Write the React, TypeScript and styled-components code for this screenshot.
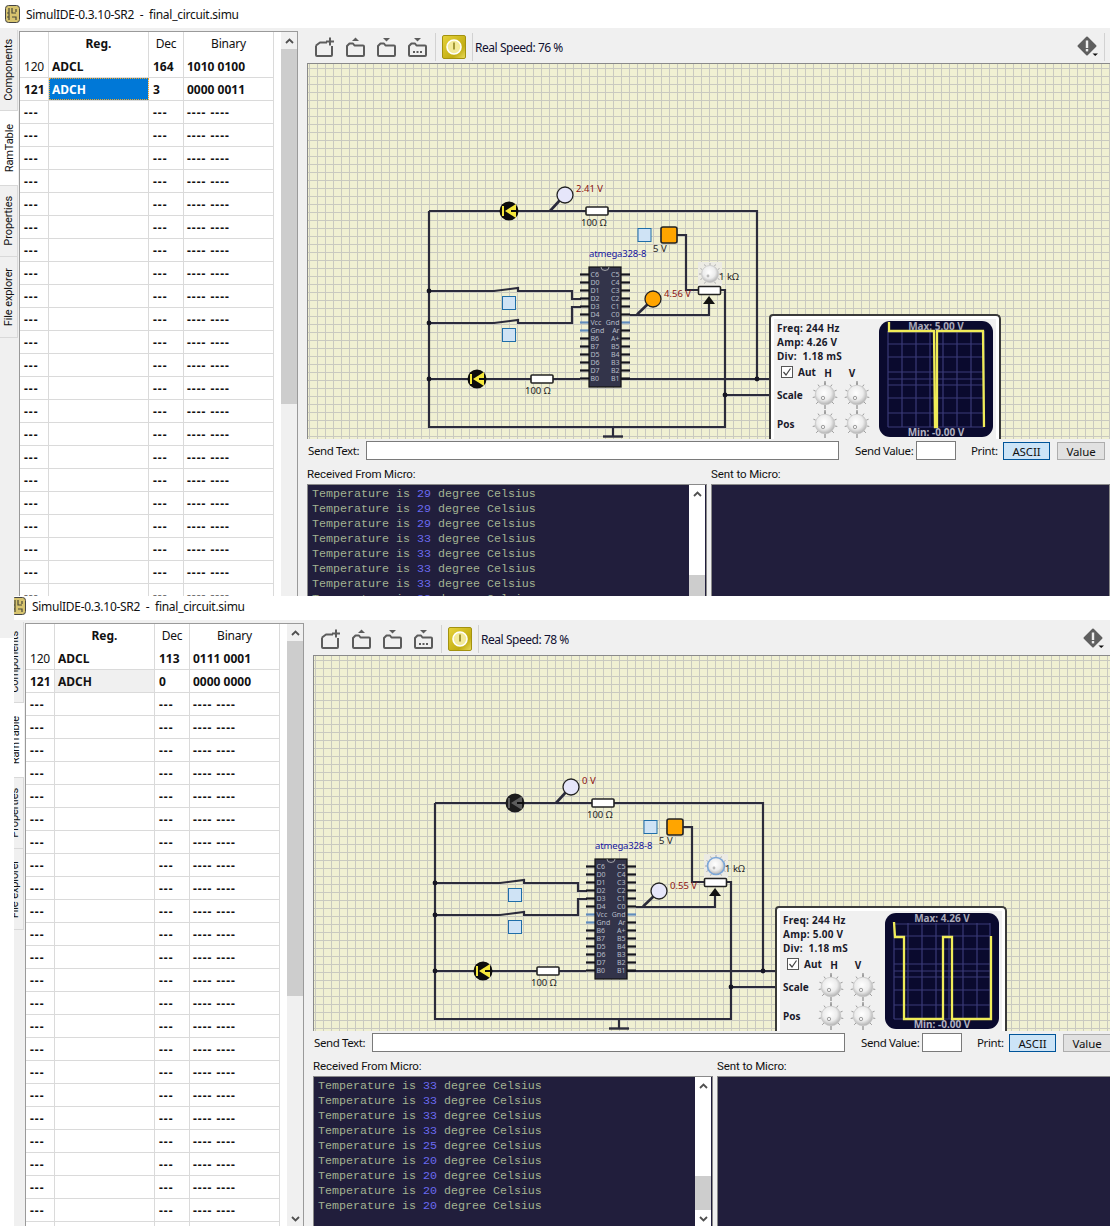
import React from "react";
import styled, { createGlobalStyle } from "styled-components";

const UI = `"Noto Sans", "Open Sans", Arial, sans-serif`;
const NARROW = `Roboto, "Noto Sans", Arial, sans-serif`;
const WIRE = "#2b2b3b";

const Global = createGlobalStyle`
  html, body { margin: 0; padding: 0; background: #fff; }
  body { font-family: ${UI}; font-size: 12px; color: #111; }
`;

const Desktop = styled.div`
  position: relative;
  width: 1110px;
  height: 1226px;
  overflow: hidden;
  background: #fff;
`;

const Win = styled.section<{ $left: number; $top: number; $h: number; $clip?: boolean }>`
  position: absolute;
  left: ${(p) => p.$left}px;
  top: ${(p) => p.$top}px;
  width: 1110px;
  height: ${(p) => p.$h}px;
  background: #f0f0f0;
  display: flex;
  flex-direction: column;
  overflow: hidden;
  ${(p) => (p.$clip ? "clip-path: inset(4px 0 0 8px);" : "")}
`;

const TitleBar = styled.header`
  height: 28px;
  flex: none;
  background: #fff;
  display: flex;
  align-items: center;
  gap: 6px;
  padding-left: 5px;
  font-size: 12px;
  letter-spacing: -0.28px;
  white-space: pre;
`;

const Body = styled.div`
  flex: 1;
  min-height: 0;
  display: flex;
`;

const TabStrip = styled.nav`
  width: 18px;
  flex: none;
  padding-top: 2px;
  display: flex;
  flex-direction: column;
`;

const Tab = styled.div<{ $h: number; $active?: boolean }>`
  height: ${(p) => p.$h}px;
  box-sizing: border-box;
  background: ${(p) => (p.$active ? "#fff" : "#f0f0f0")};
  border-bottom: 1px solid #d9d9d9;
  border-right: ${(p) => (p.$active ? "none" : "1px solid #d9d9d9")};
  display: flex;
  align-items: center;
  justify-content: center;
  font-family: ${NARROW};
  font-size: 11px;
  letter-spacing: -0.1px;
  white-space: nowrap;
  span {
    writing-mode: vertical-rl;
    transform: rotate(180deg);
  }
`;

const TablePane = styled.div`
  width: 279px;
  flex: none;
  box-sizing: border-box;
  margin: 3px 0 4px 1px;
  border: 1px solid #9a9a9a;
  background: #fff;
  display: flex;
  overflow: hidden;
`;

const Rows = styled.div`
  width: 254px;
  flex: none;
  overflow: hidden;
`;

const Row = styled.div<{ $header?: boolean }>`
  display: grid;
  grid-template-columns: 29px 100px 35px 90px;
  height: 23px;
  box-sizing: border-box;
  border-bottom: ${(p) => (p.$header ? "none" : "1px solid #dadada")};
`;

const Cell = styled.div<{
  $bold?: boolean;
  $center?: boolean;
  $pad?: number;
  $dash?: boolean;
  $sel?: "focus" | "idle";
}>`
  border-right: 1px solid #dadada;
  display: flex;
  align-items: center;
  justify-content: ${(p) => (p.$center ? "center" : "flex-start")};
  padding-left: ${(p) => (p.$center ? 0 : p.$pad ?? 4)}px;
  font-size: 12px;
  letter-spacing: ${(p) => (p.$dash ? "1px" : p.$bold ? "0" : "-0.2px")};
  font-weight: ${(p) => (p.$bold ? 700 : 400)};
  white-space: pre;
  background: ${(p) => (p.$sel === "focus" ? "#0078d7" : p.$sel === "idle" ? "#f0f0f0" : "transparent")};
  color: ${(p) => (p.$sel === "focus" ? "#fff" : "#111")};
  outline: ${(p) => (p.$sel === "focus" ? "1px dotted #f5a623" : "none")};
  outline-offset: -1px;
`;

const ScrollV = styled.div<{ $white?: boolean; $w: number }>`
  width: ${(p) => p.$w}px;
  flex: none;
  margin-left: auto;
  margin-right: ${(p) => (p.$white ? 1 : 0)}px;
  background: ${(p) => (p.$white ? "#fff" : "#f0f0f0")};
  display: flex;
  flex-direction: column;
  min-height: 0;
`;

const ScrollArrow = styled.div`
  height: 17px;
  flex: none;
  display: flex;
  align-items: center;
  justify-content: center;
  background: inherit;
`;

const ScrollTrack = styled.div<{ $offset: number; $len: number }>`
  flex: 1;
  min-height: 0;
  overflow: hidden;
  padding-top: ${(p) => p.$offset}px;
  &::before {
    content: "";
    display: block;
    height: ${(p) => p.$len}px;
    background: #cdcdcd;
  }
`;

const Chevron = ({ down }: { down?: boolean }) => (
  <svg width="9" height="6" viewBox="0 0 9 6">
    <polyline
      points={down ? "1,1 4.5,4.5 8,1" : "1,5 4.5,1.5 8,5"}
      fill="none"
      stroke="#505050"
      strokeWidth="1.8"
    />
  </svg>
);

const Main = styled.main`
  flex: 1;
  min-width: 0;
  margin-left: 9px;
  display: flex;
  flex-direction: column;
`;

const Toolbar = styled.div`
  height: 35px;
  flex: none;
  box-sizing: border-box;
  margin-left: -1px;
  display: flex;
  align-items: center;
  gap: 12px;
  padding: 2px 5px 0 9px;
`;

const Sep = styled.i<{ $before: number; $after: number }>`
  width: 1px;
  height: 28px;
  background: #d2d2d2;
  margin: 0 ${(p) => p.$after - 12}px 0 ${(p) => p.$before - 12}px;
`;

const Speed = styled.span`
  font-size: 12px;
  letter-spacing: -0.46px;
  padding-top: 1px;
  color: #101030;
  white-space: nowrap;
`;

const PowerBtn = styled.div`
  width: 24px;
  height: 24px;
  box-sizing: border-box;
  border: 1px solid #a3920f;
  border-radius: 2px;
  background: linear-gradient(135deg, #e6d23a, #c2ad12 70%, #e8d95a);
  display: flex;
  align-items: center;
  justify-content: center;
`;

const WarnWrap = styled.div`
  margin-left: auto;
  display: flex;
`;

const Canvas = styled.div`
  position: relative;
  height: 376px;
  flex: none;
  box-sizing: border-box;
  overflow: hidden;
  border-left: 1px solid #8a8a8a;
  border-top: 1px solid #8a8a8a;
  background-color: #f0f0d2;
  background-image: linear-gradient(#c9c9c0 1px, transparent 1px),
    linear-gradient(90deg, #c9c9c0 1px, transparent 1px);
  background-size: 8px 8px;
  background-position: 1px 4px;
`;

const CircuitSvg = styled.svg`
  position: absolute;
  left: -1px;
  top: -1px;
`;

const CText = styled.text<{ $c?: string; $s?: number }>`
  font-family: ${UI};
  font-size: ${(p) => p.$s ?? 9.5}px;
  fill: ${(p) => p.$c ?? "#222"};
`;

const ScopeFrame = styled.div`
  position: absolute;
  left: 461px;
  top: 250px;
  width: 232px;
  height: 140px;
  box-sizing: border-box;
  border: 2px solid #3a3a3a;
  border-bottom: none;
  border-radius: 4px 5px 0 0;
  background: #fff;
  padding: 3px 3px 0 3px;
`;

const ScopePanel = styled.div`
  height: 100%;
  background: #f0f0f0;
  display: flex;
  padding: 2px 0 0 3px;
  box-sizing: border-box;
`;

const ScopeControls = styled.div`
  width: 102px;
  flex: none;
  display: flex;
  flex-direction: column;
`;

const Readout = styled.div`
  height: 14px;
  line-height: 14px;
  font-size: 10px;
  font-weight: 700;
  letter-spacing: 0.25px;
  white-space: pre;
  color: #1a1a2a;
`;

const KnobGrid = styled.div`
  display: grid;
  grid-template-columns: 32px 32px 32px;
  grid-template-rows: 17px 29px 29px;
  align-items: center;
`;

const AutoCell = styled.div`
  display: flex;
  align-items: center;
  gap: 5px;
  padding-left: 4px;
  font-size: 10px;
  font-weight: 700;
  color: #1a1a2a;
  white-space: nowrap;
`;

const Check = styled.span`
  width: 12px;
  height: 12px;
  flex: none;
  box-sizing: border-box;
  border: 1px solid #555;
  background: #fff;
  display: flex;
`;

const AxisLabel = styled.span<{ $shift: number }>`
  font-size: 10px;
  font-weight: 700;
  text-align: center;
  padding-left: ${(p) => Math.max(p.$shift, 0)}px;
  padding-right: ${(p) => Math.max(-p.$shift, 0)}px;
  padding-top: 3px;
  color: #1a1a2a;
`;

const RowLabel = styled.span`
  font-size: 10px;
  font-weight: 700;
  color: #1a1a2a;
`;

const KnobBox = styled.div`
  display: flex;
  justify-content: center;
`;

const SendRow = styled.div`
  height: 25px;
  flex: none;
  box-sizing: border-box;
  display: flex;
  align-items: flex-start;
  padding: 2px 5px 0 1px;
  font-size: 11.5px;
  letter-spacing: -0.4px;
`;

const SendLabel = styled.label<{ $w: number; $ml?: number }>`
  width: ${(p) => p.$w}px;
  margin-left: ${(p) => p.$ml ?? 0}px;
  flex: none;
  line-height: 19px;
  white-space: nowrap;
`;

const Field = styled.div<{ $w?: number }>`
  ${(p) => (p.$w ? `width:${p.$w}px;flex:none;` : "flex:1;")}
  height: 19px;
  box-sizing: border-box;
  background: #fff;
  border: 1px solid #7a7a7a;
`;

const PrintBtn = styled.div<{ $on?: boolean; $w: number; $ml?: number }>`
  width: ${(p) => p.$w}px;
  height: 18px;
  margin: 1px 0 0 ${(p) => p.$ml ?? 0}px;
  box-sizing: border-box;
  flex: none;
  display: flex;
  align-items: center;
  justify-content: center;
  letter-spacing: -0.1px;
  border: 1px solid ${(p) => (p.$on ? "#005499" : "#adadad")};
  background: ${(p) => (p.$on ? "#cce4f7" : "#e1e1e1")};
  color: #111;
`;

const LabelRow = styled.div`
  height: 20px;
  flex: none;
  display: grid;
  grid-template-columns: 404px 1fr;
  align-items: center;
  font-family: ${NARROW};
  font-size: 11.5px;
  letter-spacing: -0.1px;
`;

const Terminals = styled.div`
  flex: 1;
  min-height: 0;
  display: grid;
  grid-template-columns: 400px 1fr;
  gap: 4px;
  margin-bottom: 4px;
`;

const Terminal = styled.div`
  background: #211e3c;
  box-sizing: border-box;
  border: 1px solid #8a8a8a;
  display: flex;
  min-height: 0;
  overflow: hidden;
`;

const Lines = styled.pre`
  flex: 1;
  margin: 0;
  padding: 2px 0 0 4px;
  font-family: "Liberation Mono", "Courier New", monospace;
  font-size: 11.67px;
  line-height: 15px;
  color: #a3b392;
  overflow: hidden;
  b {
    font-weight: 400;
    color: #6a6af0;
  }
`;

/* ---------- drawings ---------- */

const AppIcon = () => (
  <svg width="15" height="18" viewBox="0 0 15 18">
    <rect x="0.5" y="0.5" width="14" height="17" rx="3" fill="#d7c46f" stroke="#444" />
    <path d="M4 3v12M7 3v5h4M11 4v3M7 12h4v3M4 8H2M4 12H2" stroke="#4a4a3a" strokeWidth="1.2" fill="none" />
  </svg>
);

const GREY = "#5c5c5c";

const FileIcon = ({ kind }: { kind: "new" | "open" | "save" | "saveas" }) => (
  <svg width="19" height="20" viewBox="0 0 19 20">
    <path
      d={
        kind === "new"
          ? "M1 8.5 L5 5.5 H12 M17 9 V18 a1 1 0 0 1-1 1 H2 a1 1 0 0 1-1-1 V8.5"
          : "M1 9 L3.5 6.5 H7 L8.5 8.5 H17 a1 1 0 0 1 1 1 V18 a1 1 0 0 1-1 1 H2 a1 1 0 0 1-1-1 Z"
      }
      fill="none"
      stroke={GREY}
      strokeWidth="2"
      strokeLinejoin="round"
    />
    {kind === "new" && <path d="M15 0.5 v8 M11 4.5 h8" stroke={GREY} strokeWidth="2" />}
    {kind === "open" && <polygon points="9.5,0.5 13,4 6,4" fill={GREY} />}
    {(kind === "save" || kind === "saveas") && <polygon points="6,1 13,1 9.5,4.5" fill={GREY} />}
    {kind === "saveas" && <path d="M5 15h2M8.5 15h2M12 15h2" stroke={GREY} strokeWidth="2" />}
  </svg>
);

const PowerIcon = () => (
  <svg width="16" height="16" viewBox="0 0 16 16">
    <circle cx="8" cy="8" r="7" fill="#f3ea9a" stroke="#fff" strokeWidth="1.6" />
    <rect x="7.2" y="3.5" width="1.6" height="7" fill="#8f8420" />
  </svg>
);

const WarnIcon = () => (
  <svg width="22" height="22" viewBox="0 0 22 22">
    <path d="M10 1.5 L18.5 10 L10 18.5 L1.5 10 Z" fill="#5f5f5f" stroke="#5f5f5f" strokeWidth="2" strokeLinejoin="round" />
    <rect x="8.8" y="4.5" width="2.4" height="7.5" fill="#eee" />
    <rect x="8.8" y="13" width="2.4" height="2.4" fill="#eee" />
    <polygon points="15.5,17.5 21,17.5 18.2,20" fill="#111" />
  </svg>
);

const Led = ({ x, y, lit }: { x: number; y: number; lit: boolean }) => {
  const c = lit ? "#f5e83c" : "#5c5c5c";
  return (
    <g>
      <circle cx={x} cy={y} r="9.5" fill={lit ? "#0c0c0c" : "#1c1c1c"} />
      <polygon points={`${x + 7},${y - 7} ${x + 7},${y + 7} ${x - 4},${y}`} fill={c} />
      <rect x={x - 7} y={y - 5} width="2" height="10" fill={c} />
      <rect x={x + 2} y={y - 1} width="7" height="2" fill="#0c0c0c" />
    </g>
  );
};

const Resistor = ({ x, y, w = 22 }: { x: number; y: number; w?: number }) => (
  <rect x={x} y={y - 4} width={w} height="8" rx="1" fill="#fff" stroke="#222" strokeWidth="1.6" />
);

const Probe = ({ cx, cy, fill, x1, y1 }: { cx: number; cy: number; fill: string; x1: number; y1: number }) => (
  <g>
    <line x1={x1} y1={y1} x2={cx - 4} y2={cy + 4} stroke={WIRE} strokeWidth="2.6" />
    <circle cx={cx} cy={cy} r="8" fill={fill} stroke="#222" strokeWidth="1.3" />
  </g>
);

const Dot = ({ x, y }: { x: number; y: number }) => <circle cx={x} cy={y} r="2.4" fill="#161622" />;

const SwitchBlade = ({ y }: { y: number }) => (
  <path d={`M429 ${y} H494 L518 ${y - 3} V${y} H524`} fill="none" stroke={WIRE} strokeWidth="2.2" />
);

const BlueBox = ({ x, y }: { x: number; y: number }) => (
  <rect x={x - 6.5} y={y - 6.5} width="13" height="13" fill="#cfe3f5" stroke="#1f6ea8" strokeWidth="1" />
);

const Dial = ({ active }: { active: boolean }) => {
  const ticks = Array.from({ length: 11 }, (_, i) => (i * 300) / 10 - 240);
  return (
    <g>
      <rect x="698" y="262" width="24" height="24" fill="#ecebe4" />
      {ticks.map((a) => {
        const r = (a * Math.PI) / 180;
        return (
          <line
            key={a}
            x1={710 + 9 * Math.cos(r)}
            y1={274 + 9 * Math.sin(r)}
            x2={710 + 11 * Math.cos(r)}
            y2={274 + 11 * Math.sin(r)}
            stroke="#aaa"
          />
        );
      })}
      <circle cx="710" cy="274" r="8.5" fill="url(#knobFill)" stroke={active ? "#7aa6d8" : "#c8c8c8"} strokeWidth={active ? 1.6 : 0.8} />
      <circle cx="708" cy="276" r="1.4" fill="#bbb" />
    </g>
  );
};

const LEFT_PINS = ["C6", "D0", "D1", "D2", "D3", "D4", "Vcc", "Gnd", "B6", "B7", "D5", "D6", "D7", "B0"];
const RIGHT_PINS = ["C5", "C4", "C3", "C2", "C1", "C0", "Gnd", "Ar", "A+", "B5", "B4", "B3", "B2", "B1"];

const Chip = () => (
  <g>
    {LEFT_PINS.map((n, i) => {
      const y = 274.5 + i * 8;
      const power = n === "Vcc" || n === "Gnd";
      return (
        <g key={n + i}>
          <line x1="580" x2="589" y1={y} y2={y} stroke={power ? "#5f8bbd" : "#15151f"} strokeWidth="2.2" />
        </g>
      );
    })}
    {RIGHT_PINS.map((n, i) => {
      const y = 274.5 + i * 8;
      return <line key={n + i} x1="621" x2="630" y1={y} y2={y} stroke={n === "Gnd" ? "#5f8bbd" : "#15151f"} strokeWidth="2.2" />;
    })}
    <rect x="589" y="267" width="32" height="120" fill="#33344a" stroke="#111" strokeWidth="1.2" />
    <path d="M601 267 a4 3.5 0 0 0 8 0" fill="none" stroke="#bbb" strokeWidth="0.8" />
    {LEFT_PINS.map((n, i) => (
      <CText key={n + i} x={590.5} y={277 + i * 8} $s={7} $c="#b6bcc8">
        {n}
      </CText>
    ))}
    {RIGHT_PINS.map((n, i) => (
      <CText key={n + i} x={619.5} y={277 + i * 8} $s={7} $c="#b6bcc8" textAnchor="end">
        {n}
      </CText>
    ))}
  </g>
);

type Data = {
  title: string;
  speed: string;
  adcl: [string, string];
  adch: [string, string];
  sel: "focus" | "idle";
  ledOn: boolean;
  probe1: { fill: string; text: string };
  probe2: { fill: string; text: string };
  dialActive: boolean;
  scope: { amp: string; max: string; min: string; trace: string };
  temps: string[];
  thumb: number;
};

const Circuit = ({ d }: { d: Data }) => (
  <CircuitSvg width="803" height="376" viewBox="307 63 803 376">
    <defs>
      <radialGradient id="knobFill" cx="45%" cy="40%" r="65%">
        <stop offset="0" stopColor="#fff" />
        <stop offset="0.55" stopColor="#ececec" />
        <stop offset="1" stopColor="#a4a4a4" />
      </radialGradient>
    </defs>
    <g fill="none" stroke={WIRE} strokeWidth="2.2">
      <path d="M429 211 H757 V379 M429 211 V427 H725 V290 H716" />
      <path d="M429 379 H580 M621 379 H775 M725 395 H775" />
      <path d="M524 291 H572 V299 H581 M524 323 H572 V307 H581" />
      <path d="M677 235 H686 V290 H698" />
      <path d="M630 315 H709 V302" />
      <path d="M613 427 V436" />
      <path d="M603 436.5 H623" strokeWidth="2.4" />
    </g>
    <polygon points="703,304 715,304 709,296" fill="#111" />
    <SwitchBlade y={291} />
    <SwitchBlade y={323} />
    <Dot x={429} y={291} />
    <Dot x={429} y={323} />
    <Dot x={429} y={379} />
    <Dot x={757} y={379} />
    <Dot x={725} y={395} />
    <Led x={509} y={211} lit={d.ledOn} />
    <Led x={477} y={379} lit />
    <Probe cx={565} cy={195} fill={d.probe1.fill} x1={550} y1={211} />
    <CText x={576} y={192} $c="#8b1010">{d.probe1.text}</CText>
    <Resistor x={586} y={211} />
    <CText x={581} y={226}>100 Ω</CText>
    <Resistor x={531} y={379} />
    <CText x={525} y={394}>100 Ω</CText>
    <BlueBox x={644.5} y={235} />
    <BlueBox x={509} y={303} />
    <BlueBox x={509} y={335} />
    <rect x="661" y="227" width="16" height="16" rx="2" fill="#ffa500" stroke="#222" strokeWidth="1.6" />
    <CText x={653} y={252}>5 V</CText>
    <CText x={589} y={257} $c="#1414a0" letterSpacing="-0.15">atmega328-8</CText>
    <Chip />
    <Probe cx={653} cy={299} fill={d.probe2.fill} x1={637} y1={314.5} />
    <CText x={664} y={297} $c="#8b1010">{d.probe2.text}</CText>
    <Dial active={d.dialActive} />
    <Resistor x={698.5} y={290.5} />
    <CText x={719} y={280}>1 kΩ</CText>
  </CircuitSvg>
);

const Knob = () => {
  const ticks = Array.from({ length: 9 }, (_, i) => -225 + i * 33.75);
  return (
    <svg width="28" height="28" viewBox="0 0 28 28">
      {ticks.map((a) => {
        const r = (a * Math.PI) / 180;
        return (
          <line
            key={a}
            x1={14 + 10 * Math.cos(r)}
            y1={14 + 10 * Math.sin(r)}
            x2={14 + 12.5 * Math.cos(r)}
            y2={14 + 12.5 * Math.sin(r)}
            stroke="#9a9a9a"
          />
        );
      })}
      <line x1="14" y1="0" x2="14" y2="4" stroke="#777" />
      <line x1="14" y1="24" x2="14" y2="28" stroke="#777" />
      <circle cx="14" cy="14" r="9.8" fill="url(#knobFill)" stroke="#c4c4c4" strokeWidth="0.7" />
      <circle cx="12" cy="17" r="1.7" fill="none" stroke="#a0a0a0" />
    </svg>
  );
};

const VX = [9, 23, 37, 51, 64, 78, 92, 105];
const HY = [11, 23, 36, 51, 58, 64, 77, 92, 106];

const ScopeScreen = ({ s }: { s: Data["scope"] }) => (
  <svg width="114" height="116" viewBox="0 0 114 116">
    <rect width="114" height="116" rx="11" fill="#0a0a2e" />
    {VX.map((x) => (
      <line key={x} x1={x} x2={x} y1="10" y2="106" stroke="#3a3a78" strokeWidth="1.2" />
    ))}
    {HY.map((y) => (
      <line key={y} x1="9" x2="105" y1={y} y2={y} stroke="#3a3a78" strokeWidth="1.2" />
    ))}
    <polyline points={s.trace} fill="none" stroke="#f0ec58" strokeWidth="2.3" />
    <CText x="57" y="9" textAnchor="middle" $s={10} $c="#a8a8b8" style={{ fontWeight: 700 }}>{s.max}</CText>
    <CText x="57" y="115" textAnchor="middle" $s={10} $c="#b0b0c0" style={{ fontWeight: 700 }}>{s.min}</CText>
  </svg>
);

const Scope = ({ s }: { s: Data["scope"] }) => (
  <ScopeFrame>
    <ScopePanel>
      <ScopeControls>
        <Readout>Freq: 244 Hz</Readout>
        <Readout>Amp: {s.amp}</Readout>
        <Readout>{"Div:  1.18 mS"}</Readout>
        <KnobGrid>
          <AutoCell>
            <Check>
              <svg width="10" height="10" viewBox="0 0 10 10">
                <polyline points="1.5,5 4,8 8.5,1.5" fill="none" stroke="#444" strokeWidth="1.2" />
              </svg>
            </Check>
            Aut
          </AutoCell>
          <AxisLabel $shift={6}>H</AxisLabel>
          <AxisLabel $shift={-10}>V</AxisLabel>
          <RowLabel>Scale</RowLabel>
          <KnobBox><Knob /></KnobBox>
          <KnobBox><Knob /></KnobBox>
          <RowLabel>Pos</RowLabel>
          <KnobBox><Knob /></KnobBox>
          <KnobBox><Knob /></KnobBox>
        </KnobGrid>
      </ScopeControls>
      <ScopeScreen s={s} />
    </ScopePanel>
  </ScopeFrame>
);

const TABS: [string, number, boolean][] = [
  ["Components", 81, false],
  ["RamTable", 75, true],
  ["Properties", 71, false],
  ["File explorer", 81, false],
];

const EMPTY_ROWS = Array.from({ length: 24 }, (_, i) => i);

const Window = ({ d, left, top, h, clip }: { d: Data; left: number; top: number; h: number; clip?: boolean }) => (
  <Win $left={left} $top={top} $h={h} $clip={clip}>
    <TitleBar>
      <AppIcon />
      <span>{d.title}</span>
    </TitleBar>
    <Body>
      <TabStrip>
        {TABS.map(([name, height, active]) => (
          <Tab key={name} $h={height} $active={active}>
            <span>{name}</span>
          </Tab>
        ))}
      </TabStrip>
      <TablePane>
        <Rows>
          <Row $header>
            <Cell />
            <Cell $bold $center>Reg.</Cell>
            <Cell $center>Dec</Cell>
            <Cell $center>Binary</Cell>
          </Row>
          <Row>
            <Cell>120</Cell>
            <Cell $bold $pad={3}>ADCL</Cell>
            <Cell $bold>{d.adcl[0]}</Cell>
            <Cell $bold $pad={3}>{d.adcl[1]}</Cell>
          </Row>
          <Row>
            <Cell $bold>121</Cell>
            <Cell $bold $pad={3} $sel={d.sel}>ADCH</Cell>
            <Cell $bold>{d.adch[0]}</Cell>
            <Cell $bold $pad={3}>{d.adch[1]}</Cell>
          </Row>
          {EMPTY_ROWS.map((i) => (
            <Row key={i}>
              <Cell $dash $bold>---</Cell>
              <Cell />
              <Cell $dash $bold>---</Cell>
              <Cell $dash $bold $pad={3}>---- ----</Cell>
            </Row>
          ))}
        </Rows>
        <ScrollV $w={16}>
          <ScrollArrow><Chevron /></ScrollArrow>
          <ScrollTrack $offset={0} $len={355} />
          <ScrollArrow><Chevron down /></ScrollArrow>
        </ScrollV>
      </TablePane>
      <Main>
        <Toolbar>
          <FileIcon kind="new" />
          <FileIcon kind="open" />
          <FileIcon kind="save" />
          <FileIcon kind="saveas" />
          <Sep $before={8} $after={6} />
          <PowerBtn><PowerIcon /></PowerBtn>
          <Sep $before={6} $after={2} />
          <Speed>Real Speed: {d.speed}</Speed>
          <WarnWrap><WarnIcon /></WarnWrap>
          <Sep $before={5} $after={12} />
        </Toolbar>
        <Canvas>
          <Circuit d={d} />
          <Scope s={d.scope} />
        </Canvas>
        <SendRow>
          <SendLabel $w={58}>Send Text:</SendLabel>
          <Field />
          <SendLabel $w={61} $ml={16}>Send Value:</SendLabel>
          <Field $w={40} />
          <SendLabel $w={32} $ml={15}>Print:</SendLabel>
          <PrintBtn $on $w={47}>ASCII</PrintBtn>
          <PrintBtn $w={48} $ml={7}>Value</PrintBtn>
        </SendRow>
        <LabelRow>
          <span>Received From Micro:</span>
          <span>Sent to Micro:</span>
        </LabelRow>
        <Terminals>
          <Terminal>
            <Lines>
              {d.temps.map((t, i) => (
                <React.Fragment key={i}>
                  {"Temperature is "}
                  <b>{t}</b>
                  {" degree Celsius\n"}
                </React.Fragment>
              ))}
            </Lines>
            <ScrollV $w={16} $white>
              <ScrollArrow><Chevron /></ScrollArrow>
              <ScrollTrack $offset={d.thumb} $len={35} />
              <ScrollArrow><Chevron down /></ScrollArrow>
            </ScrollV>
          </Terminal>
          <Terminal />
        </Terminals>
      </Main>
    </Body>
  </Win>
);

const TOP: Data = {
  title: "SimulIDE-0.3.10-SR2  -  final_circuit.simu",
  speed: "76 %",
  adcl: ["164", "1010 0100"],
  adch: ["3", "0000 0011"],
  sel: "focus",
  ledOn: true,
  probe1: { fill: "#e6e6fa", text: "2.41 V" },
  probe2: { fill: "#ffa500", text: "4.56 V" },
  dialActive: false,
  scope: {
    amp: "4.26 V",
    max: "Max: 5.00 V",
    min: "Min: -0.00 V",
    trace: "10,1 10,10 55,10 56,106 58,106 58,10 104,10 105,106",
  },
  temps: ["29", "29", "29", "33", "33", "33", "33", "33"],
  thumb: 73,
};

const BOTTOM: Data = {
  title: "SimulIDE-0.3.10-SR2  -  final_circuit.simu",
  speed: "78 %",
  adcl: ["113", "0111 0001"],
  adch: ["0", "0000 0000"],
  sel: "idle",
  ledOn: false,
  probe1: { fill: "#e6e6fa", text: "0 V" },
  probe2: { fill: "#e6e6fa", text: "0.55 V" },
  dialActive: true,
  scope: {
    amp: "5.00 V",
    max: "Max: 4.26 V",
    min: "Min: -0.00 V",
    trace: "9,9 10,24 19,24 19,106 58,106 58,24 67,24 67,106 106,106 106,23",
  },
  temps: ["33", "33", "33", "33", "25", "20", "20", "20", "20"],
  thumb: 82,
};

export default function App() {
  return (
    <Desktop>
      <Global />
      <Window d={TOP} left={0} top={0} h={638} />
      <Window d={BOTTOM} left={6} top={592} h={640} clip />
    </Desktop>
  );
}
